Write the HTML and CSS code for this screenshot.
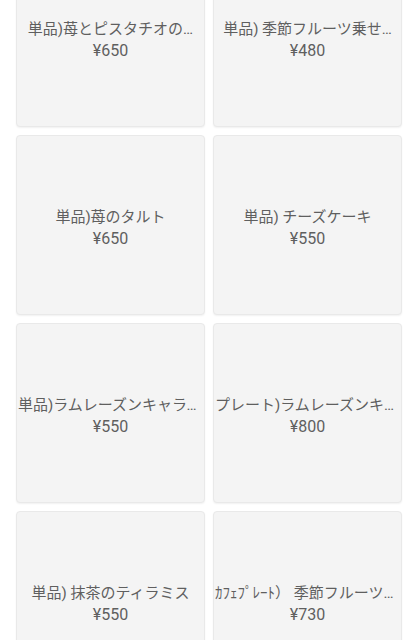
FILE: index.html
```html
<!DOCTYPE html>
<html lang="ja">

<head>
    <meta charset="utf-8">
    <title>メニュー</title>
    <link rel="stylesheet" href="styles.css">
</head>

<body>
    <div class="menu-view">
        <div class="menu-grid">
            <div class="menu-item">
                <div class="item-name" title="単品)苺とピスタチオのタルト">単品)苺とピスタチオの…</div>
                <div class="item-price">¥650</div>
            </div>
            <div class="menu-item">
                <div class="item-name" title="単品) 季節フルーツ乗せタルト">単品) 季節フルーツ乗せ…</div>
                <div class="item-price">¥480</div>
            </div>
            <div class="menu-item">
                <div class="item-name">単品)苺のタルト</div>
                <div class="item-price">¥650</div>
            </div>
            <div class="menu-item">
                <div class="item-name">単品) チーズケーキ</div>
                <div class="item-price">¥550</div>
            </div>
            <div class="menu-item">
                <div class="item-name">単品)ラムレーズンキャラメルケーキ</div>
                <div class="item-price">¥550</div>
            </div>
            <div class="menu-item">
                <div class="item-name">プレート)ラムレーズンキャラメルケーキ</div>
                <div class="item-price">¥800</div>
            </div>
            <div class="menu-item">
                <div class="item-name">単品) 抹茶のティラミス</div>
                <div class="item-price">¥550</div>
            </div>
            <div class="menu-item">
                <div class="item-name">ｶﾌｪﾌﾟﾚｰﾄ） 季節フルーツ乗せタルト</div>
                <div class="item-price">¥730</div>
            </div>
        </div>
    </div>
</body>
</html>
```

FILE: styles.css
```css
body {
    margin: 0;
    padding: 0;
    background-color: #fff;
    font-family: Roboto, "Noto Sans CJK JP", sans-serif;
    overflow: hidden;
}

.menu-view {
    padding: 0 16px;
}

/* list is scrolled a little, first row is cut at the top */
.menu-grid {
    margin-top: -53px;
    display: grid;
    grid-template-columns: 1fr 1fr;
    gap: 8px;
}

.menu-item {
    height: 180px;
    box-sizing: border-box;
    padding: 5px 1px 0;
    display: flex;
    flex-direction: column;
    justify-content: center;
    align-items: stretch;
    text-align: center;
    background-color: #f4f4f4;
    border: 1px solid #e9e9e9;
    border-radius: 4px;
    box-shadow: 0 1px 2px rgba(0, 0, 0, 0.06);
    min-width: 0;
}

.item-name,
.item-price {
    font-size: 15px;
    line-height: 21px;
    color: #5f5f5f;
    white-space: nowrap;
    overflow: hidden;
    text-overflow: ellipsis;
}

.item-price {
    font-size: 16px;
}
```
